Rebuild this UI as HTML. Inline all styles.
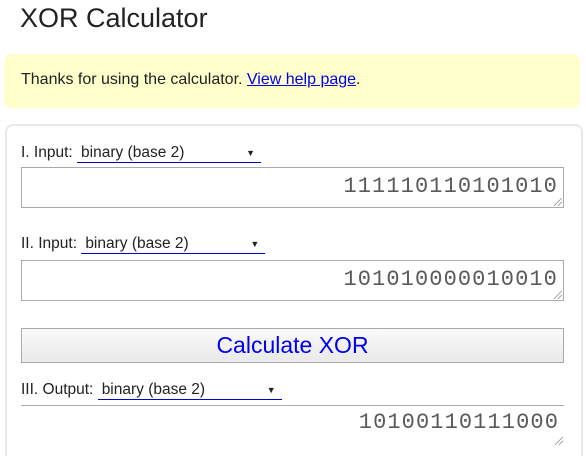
<!DOCTYPE html>
<html style="height:456px;overflow:hidden"><head><meta charset="utf-8"><style>
body{margin:0;width:586px;height:456px;overflow:hidden;background:#fff;font-family:"Liberation Sans",sans-serif;color:#222;position:relative}
.a{position:absolute}
h1{position:absolute;left:20px;top:3px;margin:0;font-weight:normal;font-size:27px;color:#222}
.note{left:4px;top:54px;width:576px;height:54px;background:#ffffcc;border-radius:8px}
.note span{position:absolute;left:17px;top:17px;font-size:16px}
.note a{color:#00e;text-decoration:underline}
.box{left:5px;top:124px;width:574px;height:332px;border:2px solid #e8e8e8;border-bottom:none;border-radius:8px 8px 0 0}
.lbl{font-size:15.5px;color:#222}
.sel{display:inline-block;border-bottom:1.5px solid #00c;width:180px;position:relative;padding-left:4px;color:#222}
.sel:after{content:"▼";position:absolute;right:6px;top:4px;font-size:9px}
.ta{left:21px;width:541px;border:1px solid #aaa;background:#fff}
.num{position:absolute;right:5px;font-family:"Liberation Mono",monospace;font-size:22px;letter-spacing:1.1px;color:#5a5a5a}
.rs{position:absolute;right:1px;bottom:1px;width:8px;height:8px;background:linear-gradient(135deg,transparent 45%,#888 46%,#888 52%,transparent 53%,transparent 70%,#888 71%,#888 77%,transparent 78%)}
.btn{left:21px;top:328px;width:541px;height:33px;border:1px solid #aaa;background:linear-gradient(#fafafa,#e9e9e9);text-align:center;font-size:23px;color:#00e;line-height:33px}
</style></head><body>
<h1>XOR Calculator</h1>
<div class="a note"><span>Thanks for using the calculator. <a>View help page</a>.</span></div>
<div class="a box"></div>
<div class="a lbl" style="left:21px;top:144px">I. Input: <span class="sel" style="width:180px">binary (base 2)</span></div>
<div class="a ta" style="top:167px;height:39px"><span class="num" style="top:6px">111110110101010</span><i class="rs"></i></div>
<div class="a lbl" style="left:21px;top:235px">II. Input: <span class="sel">binary (base 2)</span></div>
<div class="a ta" style="top:260px;height:39px"><span class="num" style="top:6px">101010000010010</span><i class="rs"></i></div>
<div class="a btn">Calculate XOR</div>
<div class="a lbl" style="left:21px;top:381px">III. Output: <span class="sel">binary (base 2)</span></div>
<div class="a" style="left:21px;top:405px;width:543px;height:1px;background:#aaa"></div>
<div class="a" style="left:21px;top:406px;width:543px;height:40px"><span class="num" style="top:4px">10100110111000</span><i class="rs"></i></div>
</body></html>
